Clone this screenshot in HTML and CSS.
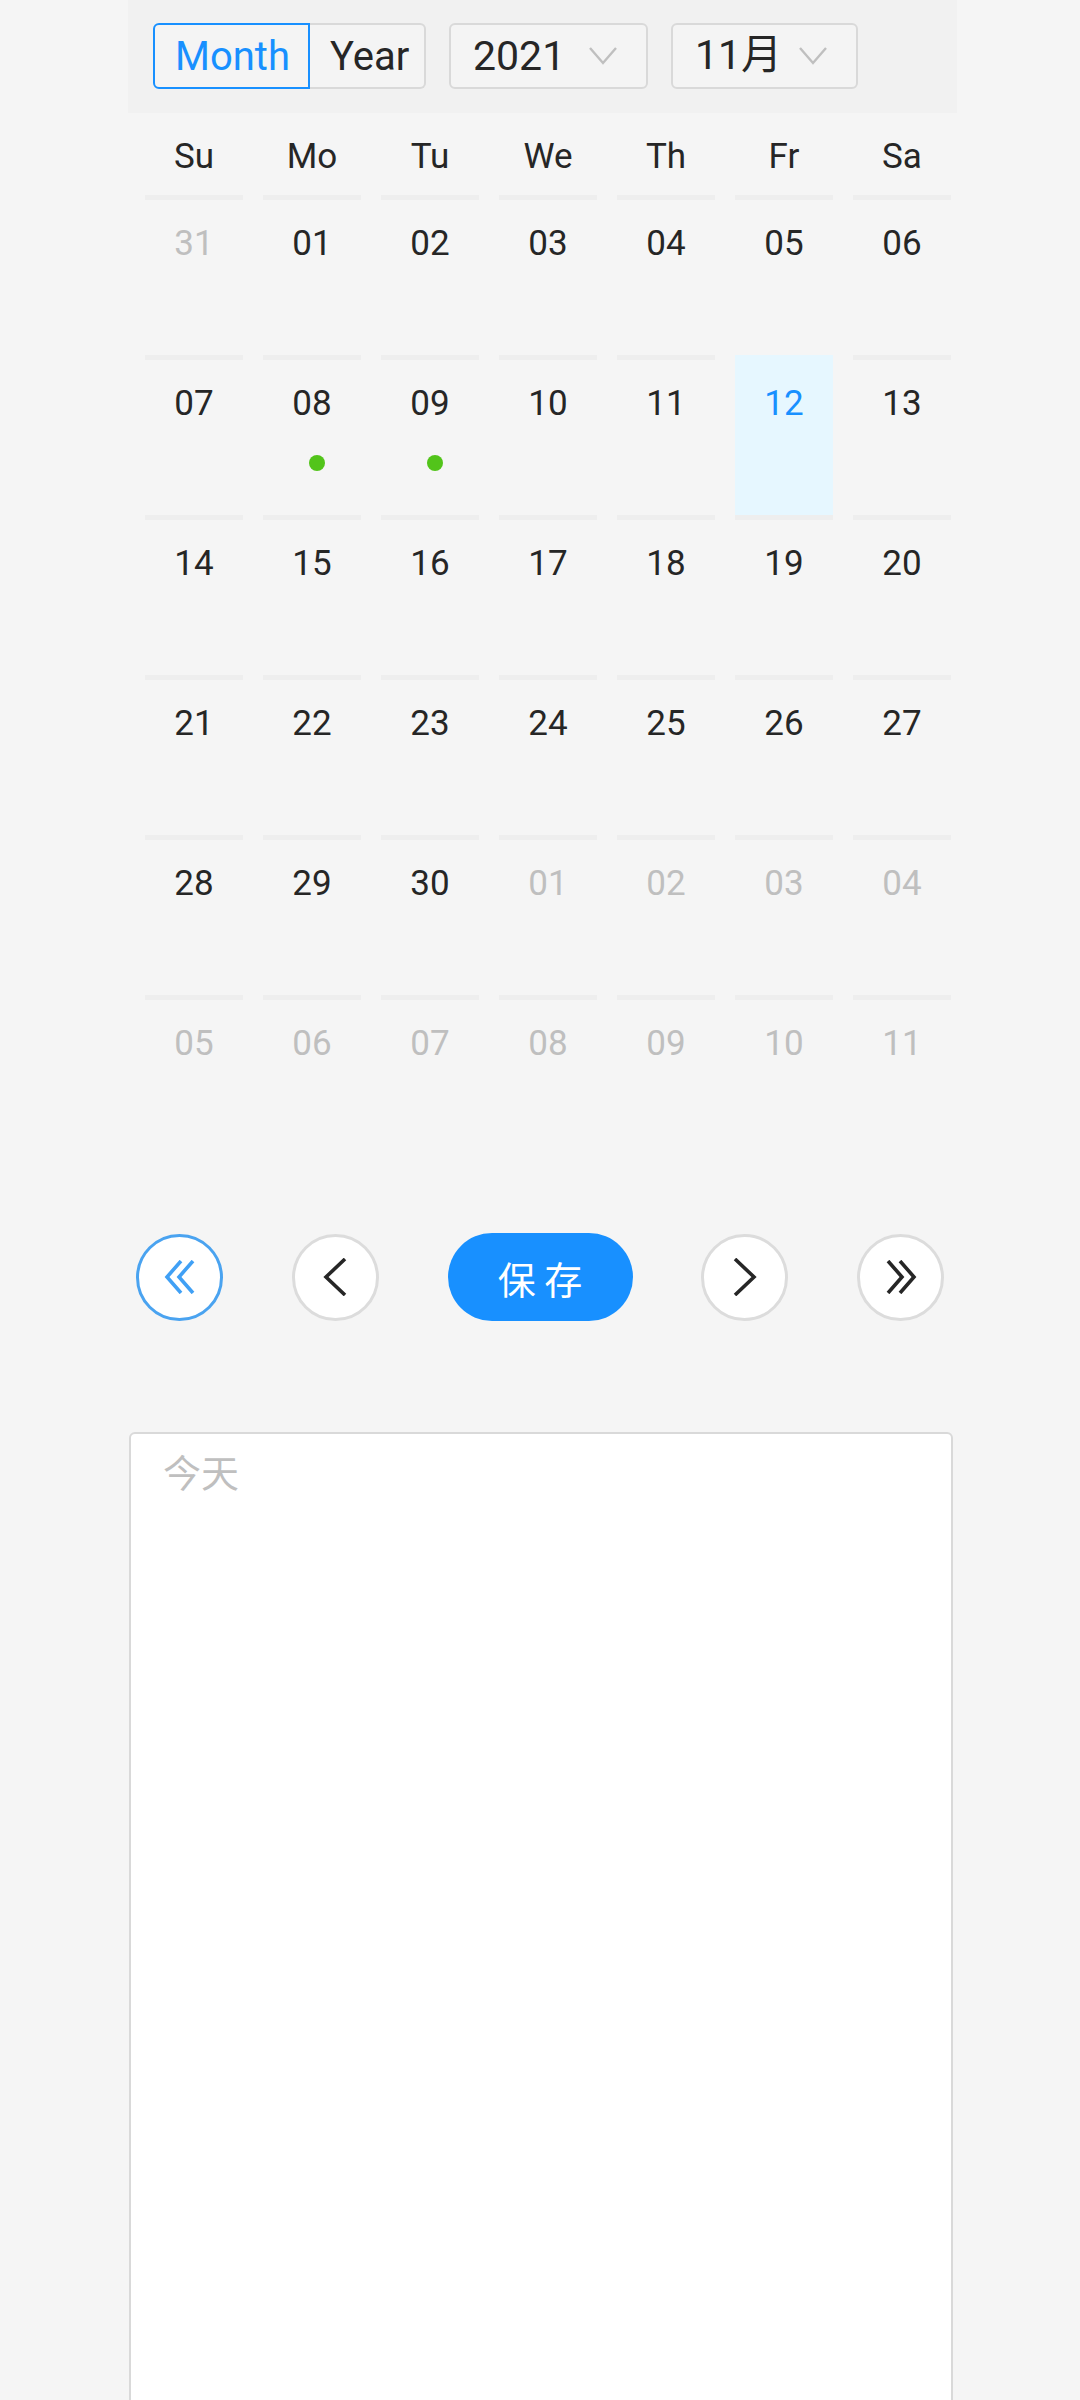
FILE: index.html
```html
<!DOCTYPE html>
<html lang="zh">
<head>
<meta charset="utf-8">
<title>Calendar</title>
<link rel="stylesheet" href="styles.css">
</head>
<body>
<div class="app">
  <div class="toolbar">
    <div class="radio-group">
      <span class="radio radio-month active">Month</span>
      <span class="radio radio-year">Year</span>
    </div>
    <div class="select select-year">
      <span class="select-value">2021</span>
      <svg class="arrow" viewBox="0 0 28 18"><polyline points="1,1 14,16 27,1"/></svg>
    </div>
    <div class="select select-month">
      <span class="select-value">11月</span>
      <svg class="arrow" viewBox="0 0 28 18"><polyline points="1,1 14,16 27,1"/></svg>
    </div>
  </div>

  <div class="weekdays">
    <span>Su</span><span>Mo</span><span>Tu</span><span>We</span><span>Th</span><span>Fr</span><span>Sa</span>
  </div>

  <div class="dates">
    <div class="cell out"><span class="num">31</span></div>
    <div class="cell"><span class="num">01</span></div>
    <div class="cell"><span class="num">02</span></div>
    <div class="cell"><span class="num">03</span></div>
    <div class="cell"><span class="num">04</span></div>
    <div class="cell"><span class="num">05</span></div>
    <div class="cell"><span class="num">06</span></div>

    <div class="cell"><span class="num">07</span></div>
    <div class="cell"><span class="num">08</span><span class="dot"></span></div>
    <div class="cell"><span class="num">09</span><span class="dot"></span></div>
    <div class="cell"><span class="num">10</span></div>
    <div class="cell"><span class="num">11</span></div>
    <div class="cell today"><span class="num">12</span></div>
    <div class="cell"><span class="num">13</span></div>

    <div class="cell"><span class="num">14</span></div>
    <div class="cell"><span class="num">15</span></div>
    <div class="cell"><span class="num">16</span></div>
    <div class="cell"><span class="num">17</span></div>
    <div class="cell"><span class="num">18</span></div>
    <div class="cell"><span class="num">19</span></div>
    <div class="cell"><span class="num">20</span></div>

    <div class="cell"><span class="num">21</span></div>
    <div class="cell"><span class="num">22</span></div>
    <div class="cell"><span class="num">23</span></div>
    <div class="cell"><span class="num">24</span></div>
    <div class="cell"><span class="num">25</span></div>
    <div class="cell"><span class="num">26</span></div>
    <div class="cell"><span class="num">27</span></div>

    <div class="cell"><span class="num">28</span></div>
    <div class="cell"><span class="num">29</span></div>
    <div class="cell"><span class="num">30</span></div>
    <div class="cell out"><span class="num">01</span></div>
    <div class="cell out"><span class="num">02</span></div>
    <div class="cell out"><span class="num">03</span></div>
    <div class="cell out"><span class="num">04</span></div>

    <div class="cell out"><span class="num">05</span></div>
    <div class="cell out"><span class="num">06</span></div>
    <div class="cell out"><span class="num">07</span></div>
    <div class="cell out"><span class="num">08</span></div>
    <div class="cell out"><span class="num">09</span></div>
    <div class="cell out"><span class="num">10</span></div>
    <div class="cell out"><span class="num">11</span></div>
  </div>

  <div class="actions">
    <button class="circle focus" aria-label="上一年">
      <svg class="icon-double" viewBox="0 0 32 34"><polyline points="17,1 3,17 17,33"/><polyline points="29,1 15,17 29,33"/></svg>
    </button>
    <button class="circle" aria-label="上一月">
      <svg class="icon-single" viewBox="0 0 24 38"><polyline points="22,1 3,19 22,37"/></svg>
    </button>
    <button class="save">保 存</button>
    <button class="circle" aria-label="下一月">
      <svg class="icon-single" viewBox="0 0 24 38"><polyline points="2,1 21,19 2,37"/></svg>
    </button>
    <button class="circle" aria-label="下一年">
      <svg class="icon-double" viewBox="0 0 32 34"><polyline points="3,1 17,17 3,33"/><polyline points="15,1 29,17 15,33"/></svg>
    </button>
  </div>

  <div class="notes"><span class="placeholder">今天</span></div>
</div>
</body>
</html>
```

FILE: styles.css
```css
html, body {
  margin: 0;
  padding: 0;
}

body {
  background: #f5f5f5;
  color: #262626;
  font-family: Roboto, "Noto Sans CJK SC", sans-serif;
}

.app {
  width: 826px;
  margin: 0 auto;
}

/* ---------- toolbar ---------- */
.toolbar {
  display: flex;
  align-items: flex-start;
  gap: 23px;
  height: 113px;
  box-sizing: border-box;
  padding: 23px 0 0 25px;
  margin: 0 -4px 0 1px;
  background: #f1f1f1;
}

.radio-group {
  display: flex;
}

.radio {
  display: flex;
  align-items: center;
  box-sizing: border-box;
  height: 66px;
  font-size: 40px;
  border: 2px solid #d9d9d9;
  background: #f4f4f4;
  color: #262626;
}

.radio-month {
  width: 157px;
  padding-left: 20px;
  border-radius: 6px 0 0 6px;
}

.radio-year {
  width: 116px;
  padding-left: 20px;
  border-left: none;
  border-radius: 0 6px 6px 0;
}

.radio.active {
  color: #1890ff;
  border-color: #1890ff;
}

.select {
  display: flex;
  align-items: center;
  justify-content: space-between;
  box-sizing: border-box;
  height: 66px;
  padding: 0 29px 0 22px;
  border: 2px solid #d9d9d9;
  border-radius: 6px;
  background: #f4f4f4;
  font-size: 41px;
  color: #262626;
}

.select-value {
  display: block;
  height: 48px;
  line-height: 48px;
  overflow: visible;
}

.select-year {
  width: 199px;
}

.select-month {
  width: 187px;
}

.select-month .select-value {
  margin-top: -3px;
}

.arrow {
  width: 28px;
  height: 18px;
  fill: none;
  stroke: #bfbfbf;
  stroke-width: 2.4;
}

/* ---------- calendar ---------- */
.weekdays {
  display: grid;
  grid-template-columns: repeat(7, 118px);
  margin-left: 8px;
  height: 82px;
  box-sizing: border-box;
  padding-top: 4px;
  align-items: center;
  justify-items: center;
  font-size: 35px;
  color: #262626;
}

.dates {
  display: grid;
  grid-template-columns: repeat(7, 118px);
  grid-auto-rows: 160px;
  margin-left: 8px;
}

.cell {
  margin: 0 10px;
  border-top: 5px solid #eeeeee;
  display: flex;
  flex-direction: column;
  align-items: center;
}

.num {
  font-size: 35px;
  line-height: 44px;
  margin-top: 22px;
  color: #262626;
}

.cell.out .num {
  color: #bfbfbf;
}

.cell.today {
  background: #e6f7ff;
  border-top-color: #e6f7ff;
}

.cell.today .num {
  color: #1890ff;
}

.dot {
  width: 16px;
  height: 16px;
  border-radius: 50%;
  background: #52c41a;
  margin-top: 29px;
  margin-left: 10px;
}

/* ---------- actions ---------- */
.actions {
  display: flex;
  justify-content: space-between;
  align-items: center;
  margin-top: 78px;
  padding: 0 9px;
}

.circle {
  width: 87px;
  height: 87px;
  box-sizing: border-box;
  border-radius: 50%;
  border: 3px solid #dcdcdc;
  background: #fff;
  padding: 0;
  display: flex;
  align-items: center;
  justify-content: center;
  cursor: pointer;
}

.circle svg {
  fill: none;
  stroke: #262626;
  stroke-width: 3.6;
  stroke-linejoin: miter;
  stroke-linecap: butt;
}

.circle.focus {
  border-color: #4aa3f0;
}

.circle.focus svg {
  stroke: #40a0f5;
}

.icon-double {
  width: 32px;
  height: 34px;
}

.icon-single {
  width: 24px;
  height: 38px;
}

.save {
  width: 185px;
  height: 88px;
  border: none;
  border-radius: 44px;
  background: #1890ff;
  color: #fff;
  font-family: "Noto Sans CJK SC", sans-serif;
  font-size: 38px;
  padding: 0;
  cursor: pointer;
}

/* ---------- notes ---------- */
.notes {
  margin-top: 111px;
  margin-left: 2px;
  width: 824px;
  height: 1000px;
  box-sizing: border-box;
  padding: 8px 32px;
  border: 2px solid #d9d9d9;
  border-radius: 6px;
  background: #fff;
  font-family: "Noto Sans CJK SC", sans-serif;
  font-size: 38px;
  line-height: 1.5;
}

.placeholder {
  color: #bfbfbf;
}
```
